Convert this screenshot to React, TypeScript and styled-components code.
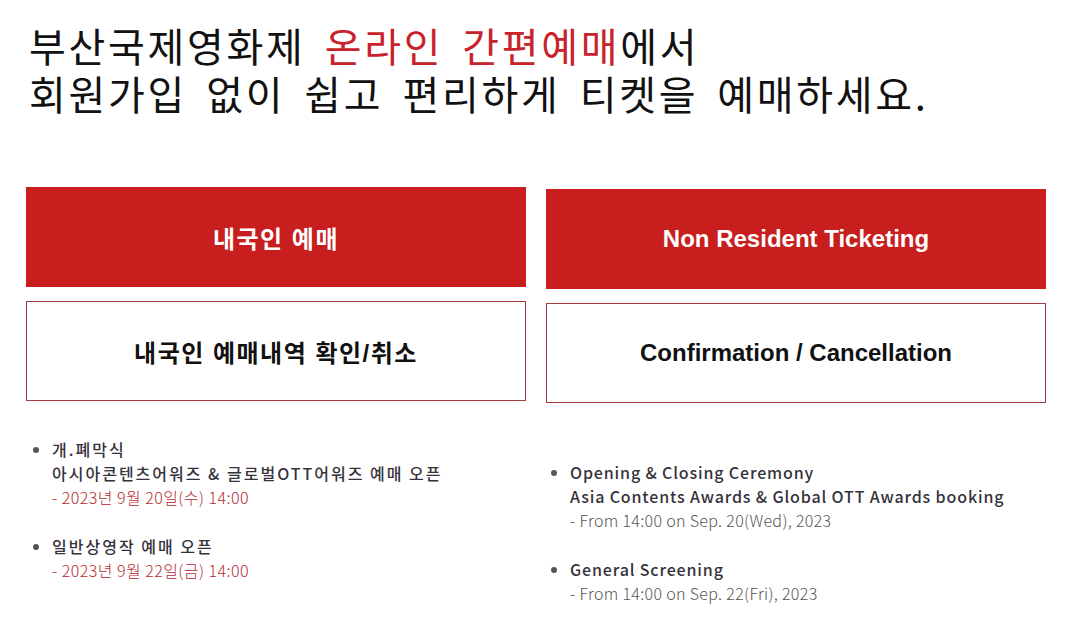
import styled, { createGlobalStyle } from 'styled-components';

const GlobalStyle = createGlobalStyle`
  body {
    margin: 0;
    background: #fff;
    font-family: 'Noto Sans CJK KR', 'Noto Sans', sans-serif;
  }
`;

const Page = styled.div`
  padding: 21px 21px 0 26px;
`;

const Title = styled.h1`
  margin: 0 0 70px 3px;
  font-size: 40px;
  line-height: 48px;
  font-weight: 400;
  letter-spacing: 2.7px;
  word-spacing: 7.5px;
  color: #111;

  em {
    font-style: normal;
    color: #c8232a;
  }
`;

const Columns = styled.div`
  display: grid;
  grid-template-columns: 500px 500px;
  column-gap: 20px;
`;

const Column = styled.div<{ $shift?: number }>`
  display: flex;
  flex-direction: column;
  padding-top: ${(p) => p.$shift || 0}px;
`;

const Button = styled.a<{ $outline?: boolean; $ko?: boolean }>`
  box-sizing: border-box;
  display: flex;
  align-items: center;
  justify-content: center;
  height: 100px;
  margin-bottom: 14px;
  font-family: 'Liberation Sans', 'Noto Sans CJK KR', Arial, sans-serif;
  font-size: 24px;
  font-weight: 700;
  letter-spacing: ${(p) => (p.$ko ? '1.5px' : '0')};
  text-decoration: none;
  cursor: pointer;
  background: ${(p) => (p.$outline ? '#fff' : '#c81e1e')};
  color: ${(p) => (p.$outline ? '#111' : '#fff')};
  border: ${(p) => (p.$outline ? '1px solid #a83a40' : 'none')};
`;

const Notice = styled.ul<{ $top: number; $indent: number }>`
  margin: ${(p) => p.$top}px 0 0;
  padding: 0 0 0 ${(p) => p.$indent}px;
  list-style: disc;
  color: #36323c;
  font-size: 16px;
  line-height: 24px;

  li {
    margin-bottom: 25px;
  }
  li::marker {
    color: #555;
  }
`;

const Head = styled.span<{ $ko?: boolean }>`
  display: block;
  font-weight: 500;
  letter-spacing: ${(p) => (p.$ko ? '2px' : '0.85px')};
`;

const When = styled.span<{ $ko?: boolean }>`
  display: block;
  font-weight: 300;
  letter-spacing: ${(p) => (p.$ko ? '0.45px' : '0.33px')};
  color: ${(p) => (p.$ko ? '#b52a33' : '#555')};
`;

export default function App() {
  return (
    <Page>
      <GlobalStyle />
      <Title>
        부산국제영화제 <em>온라인 간편예매</em>에서
        <br />
        회원가입 없이 쉽고 편리하게 티켓을 예매하세요.
      </Title>
      <Columns>
        <Column>
          <Button $ko>내국인 예매</Button>
          <Button $outline $ko>
            내국인 예매내역 확인/취소
          </Button>
          <Notice $top={22} $indent={26}>
            <li>
              <Head $ko>개.폐막식</Head>
              <Head $ko>아시아콘텐츠어워즈 &amp; 글로벌OTT어워즈 예매 오픈</Head>
              <When $ko>- 2023년 9월 20일(수) 14:00</When>
            </li>
            <li>
              <Head $ko>일반상영작 예매 오픈</Head>
              <When $ko>- 2023년 9월 22일(금) 14:00</When>
            </li>
          </Notice>
        </Column>
        <Column $shift={2}>
          <Button>Non Resident Ticketing</Button>
          <Button $outline>Confirmation / Cancellation</Button>
          <Notice $top={43} $indent={24}>
            <li>
              <Head>Opening &amp; Closing Ceremony</Head>
              <Head>Asia Contents Awards &amp; Global OTT Awards booking</Head>
              <When>- From 14:00 on Sep. 20(Wed), 2023</When>
            </li>
            <li>
              <Head>General Screening</Head>
              <When>- From 14:00 on Sep. 22(Fri), 2023</When>
            </li>
          </Notice>
        </Column>
      </Columns>
    </Page>
  );
}
